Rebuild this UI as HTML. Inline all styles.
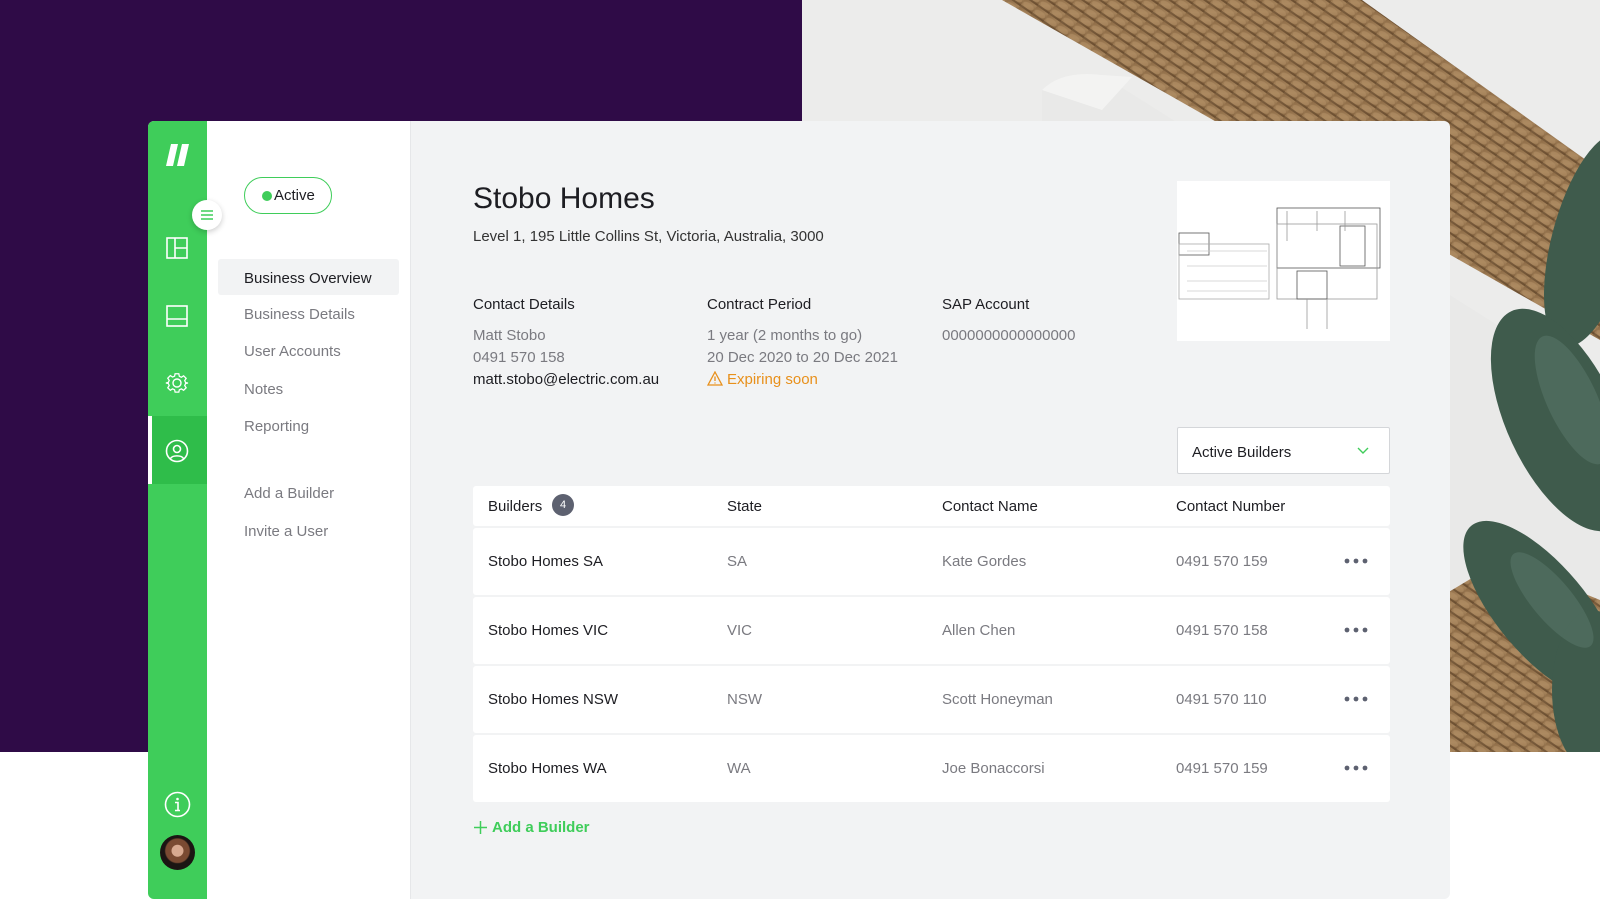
<!DOCTYPE html>
<html><head><meta charset="utf-8"><style>
*{margin:0;padding:0;box-sizing:border-box}
body{width:1600px;height:900px;position:relative;overflow:hidden;background:#fff;font-family:"Liberation Sans",sans-serif;color:#1d1d22}
.a{position:absolute}
.t{position:absolute;white-space:nowrap;font-size:15px}
.g{color:#7a7a80}
</style></head><body>
<div class="a" style="left:0;top:0;width:802px;height:752px;background:#2f0b47"></div>
<svg class="a" style="left:802px;top:0" width="798" height="752" viewBox="0 0 798 752">
  <defs>
    <linearGradient id="w" x1="0" y1="0" x2="1" y2="1"><stop offset="0" stop-color="#8c6a45"/><stop offset=".5" stop-color="#a4825a"/><stop offset="1" stop-color="#7a5a38"/></linearGradient>
    <pattern id="p" width="14" height="10" patternUnits="userSpaceOnUse" patternTransform="rotate(35)"><rect width="14" height="10" fill="url(#w)"/><ellipse cx="7" cy="5" rx="6" ry="3" fill="#b28f66" opacity=".6"/><rect y="8" width="14" height="2" fill="#5e4228" opacity=".6"/></pattern>
  </defs>
  <rect width="798" height="752" fill="#e4e4e3"/>
  <rect width="798" height="752" fill="#ececeb"/>
  <path d="M200 0H560L798 170V340Z" fill="url(#p)"/>
  <path d="M798 340L560 0H470L798 330Z" fill="url(#p)"/>
  <path d="M240 90Q260 70 300 75L798 390V752H560L240 300Z" fill="#e9e9e8"/>
  <path d="M240 90Q260 70 300 75L330 77L300 110Z" fill="#f3f3f2"/>
  <path d="M600 620L700 560L798 600V752H620Z" fill="url(#p)"/>
  <path d="M560 700L600 760L640 752Z" fill="#c9c2b5"/>
  <g fill="#3f5b4c">
    <ellipse cx="790" cy="240" rx="40" ry="110" transform="rotate(15 790 240)"/>
    <ellipse cx="760" cy="420" rx="55" ry="120" transform="rotate(-25 760 420)"/>
    <ellipse cx="740" cy="610" rx="45" ry="110" transform="rotate(-40 740 610)"/>
    <ellipse cx="790" cy="690" rx="40" ry="80"/>
  </g>
  <g fill="#5b7a6c" opacity=".5">
    <ellipse cx="770" cy="400" rx="25" ry="70" transform="rotate(-25 770 400)"/>
    <ellipse cx="750" cy="600" rx="20" ry="60" transform="rotate(-40 750 600)"/>
  </g>
</svg>
<div class="a" style="left:148px;top:121px;width:1302px;height:778px;background:#f2f3f4;border-radius:6px;overflow:hidden">
  <div class="a" style="left:0;top:0;width:59px;height:778px;background:#3fcd5a"></div>
  <div class="a" style="left:0;top:295px;width:59px;height:68px;background:#2fbd4a;border-left:4px solid #fff"></div>
  <div class="a" style="left:59px;top:0;width:204px;height:778px;background:#fff;border-right:1px solid #e6e7e9"></div>
</div>
<svg class="a" style="left:166px;top:143px" width="24" height="24" viewBox="0 0 24 24"><path d="M5 1h7L7 23H0z M16 1h7l-5 22h-7z" fill="#fff"/></svg>
<div class="a" style="left:192px;top:200px;width:30px;height:30px;border-radius:50%;background:#fff;box-shadow:0 2px 6px rgba(0,0,0,.2)"></div>
<svg class="a" style="left:200px;top:208px" width="14" height="14"><path d="M1 3h12M1 7h12M1 11h12" stroke="#3fcd5a" stroke-width="1.6"/></svg>
<svg class="a" style="left:166px;top:237px" width="22" height="22"><rect x="1" y="1" width="20" height="20" fill="none" stroke="#fff" stroke-width="1.6"/><path d="M9 1v20M9 11h12" stroke="#fff" stroke-width="1.6"/></svg>
<svg class="a" style="left:166px;top:305px" width="22" height="22"><rect x="1" y="1" width="20" height="20" fill="none" stroke="#fff" stroke-width="1.6"/><path d="M1 14h20" stroke="#fff" stroke-width="1.6"/></svg>
<svg class="a" style="left:165px;top:371px" width="24" height="24" viewBox="0 0 24 24"><path d="M10 2h4l.6 2.8 2.2 1 2.4-1.6 2.8 2.8-1.6 2.4 1 2.2L24 12v0l-2.6.6-1 2.2 1.6 2.4-2.8 2.8-2.4-1.6-2.2 1L14 22h-4l-.6-2.6-2.2-1-2.4 1.6-2.8-2.8 1.6-2.4-1-2.2L0 12l2.6-.6 1-2.2L2 6.8 4.8 4l2.4 1.6 2.2-1z" fill="none" stroke="#fff" stroke-width="1.4" transform="scale(.92) translate(1 1)"/><circle cx="12" cy="12" r="4" fill="none" stroke="#fff" stroke-width="1.4"/></svg>
<svg class="a" style="left:165px;top:439px" width="24" height="24"><circle cx="12" cy="12" r="10.5" fill="none" stroke="#fff" stroke-width="1.6"/><circle cx="12" cy="10" r="3.5" fill="none" stroke="#fff" stroke-width="1.6"/><path d="M5.5 19.5c2-3.5 11-3.5 13 0" fill="none" stroke="#fff" stroke-width="1.6"/></svg>
<svg class="a" style="left:164px;top:791px" width="27" height="27"><circle cx="13.5" cy="13.5" r="12" fill="none" stroke="#fff" stroke-width="1.6"/><circle cx="13.5" cy="8" r="1.3" fill="#fff"/><path d="M11 11.5h3v8M11 19.5h5" stroke="#fff" stroke-width="1.6" fill="none"/></svg>
<div class="a" style="left:160px;top:835px;width:35px;height:35px;border-radius:50%;background:radial-gradient(circle at 50% 45%,#d8a990 0 22%,#7a4a32 24% 45%,#1b1513 50%)"></div>
<div class="a" style="left:244px;top:177px;width:88px;height:37px;border:1.5px solid #3fcd5a;border-radius:19px"></div>
<div class="a" style="left:262px;top:191px;width:10px;height:10px;border-radius:50%;background:#3fcd5a"></div>
<div class="t" style="left:274px;top:187px;font-size:15px">Active</div>
<div class="a" style="left:218px;top:259px;width:181px;height:36px;background:#f2f3f4;border-radius:3px"></div>
<div class="t" style="left:244px;top:270px">Business Overview</div>
<div class="t g" style="left:244px;top:306px">Business Details</div>
<div class="t g" style="left:244px;top:343px">User Accounts</div>
<div class="t g" style="left:244px;top:381px">Notes</div>
<div class="t g" style="left:244px;top:418px">Reporting</div>
<div class="t g" style="left:244px;top:485px">Add a Builder</div>
<div class="t g" style="left:244px;top:523px">Invite a User</div>
<div class="t" style="left:473px;top:182px;font-size:30px">Stobo Homes</div>
<div class="t" style="left:473px;top:228px;color:#333">Level 1, 195 Little Collins St, Victoria, Australia, 3000</div>
<div class="t" style="left:473px;top:296px">Contact Details</div>
<div class="t g" style="left:473px;top:327px">Matt Stobo</div>
<div class="t g" style="left:473px;top:349px">0491 570 158</div>
<div class="t" style="left:473px;top:371px">matt.stobo@electric.com.au</div>
<div class="t" style="left:707px;top:296px">Contract Period</div>
<div class="t g" style="left:707px;top:327px">1 year (2 months to go)</div>
<div class="t g" style="left:707px;top:349px">20 Dec 2020 to 20 Dec 2021</div>
<svg class="a" style="left:707px;top:371px" width="16" height="15"><path d="M8 1L15 14H1z" fill="none" stroke="#e8901b" stroke-width="1.3"/><path d="M8 5.5v4.5M8 11.5v1" stroke="#e8901b" stroke-width="1.3"/></svg>
<div class="t" style="left:727px;top:371px;color:#e8901b">Expiring soon</div>
<div class="t" style="left:942px;top:296px">SAP Account</div>
<div class="t g" style="left:942px;top:327px">0000000000000000</div>
<div class="a" style="left:1177px;top:181px;width:213px;height:160px;background:#fff">
<svg width="213" height="160"><g fill="none" stroke="#555" stroke-width=".8"><rect x="100" y="27" width="103" height="60"/><rect x="2" y="52" width="30" height="22"/><rect x="2" y="63" width="90" height="55" stroke="#aaa"/><rect x="100" y="43" width="100" height="75" stroke="#999"/><rect x="120" y="90" width="30" height="28"/><rect x="163" y="45" width="25" height="40"/><path d="M110 30v30M140 30v20M168 30v20M130 118v30M150 118v30" stroke="#999"/><path d="M10 70h80M10 85h80M10 100h80M10 110h80" stroke="#ccc"/></g></svg></div>
<div class="a" style="left:1177px;top:427px;width:213px;height:47px;background:#fff;border:1px solid #d4d6d9;border-radius:2px"></div>
<div class="t" style="left:1192px;top:444px">Active Builders</div>
<svg class="a" style="left:1357px;top:447px" width="12" height="8"><path d="M1 1l5 5 5-5" fill="none" stroke="#3fcd5a" stroke-width="1.4"/></svg>
<div class="a" style="left:473px;top:486px;width:917px;height:40px;background:#fff;border-radius:3px"></div>
<div class="t" style="left:488px;top:498px">Builders</div>
<div class="a" style="left:552px;top:494px;width:22px;height:22px;border-radius:50%;background:#5d6170;color:#fff;font-size:11px;text-align:center;line-height:22px">4</div>
<div class="t" style="left:727px;top:498px">State</div>
<div class="t" style="left:942px;top:498px">Contact Name</div>
<div class="t" style="left:1176px;top:498px">Contact Number</div>
<div class="a" style="left:473px;top:528px;width:917px;height:67px;background:#fff;border-radius:3px"></div>
<div class="a" style="left:473px;top:597px;width:917px;height:67px;background:#fff;border-radius:3px"></div>
<div class="a" style="left:473px;top:666px;width:917px;height:67px;background:#fff;border-radius:3px"></div>
<div class="a" style="left:473px;top:735px;width:917px;height:67px;background:#fff;border-radius:3px"></div>
<div class="t" style="left:488px;top:553px">Stobo Homes SA</div><div class="t g" style="left:727px;top:553px">SA</div><div class="t g" style="left:942px;top:553px">Kate Gordes</div><div class="t g" style="left:1176px;top:553px">0491 570 159</div>
<div class="t" style="left:488px;top:622px">Stobo Homes VIC</div><div class="t g" style="left:727px;top:622px">VIC</div><div class="t g" style="left:942px;top:622px">Allen Chen</div><div class="t g" style="left:1176px;top:622px">0491 570 158</div>
<div class="t" style="left:488px;top:691px">Stobo Homes NSW</div><div class="t g" style="left:727px;top:691px">NSW</div><div class="t g" style="left:942px;top:691px">Scott Honeyman</div><div class="t g" style="left:1176px;top:691px">0491 570 110</div>
<div class="t" style="left:488px;top:760px">Stobo Homes WA</div><div class="t g" style="left:727px;top:760px">WA</div><div class="t g" style="left:942px;top:760px">Joe Bonaccorsi</div><div class="t g" style="left:1176px;top:760px">0491 570 159</div>
<svg class="a" style="left:1344px;top:558px" width="26" height="230" fill="#5d6170"><g><circle cx="3" cy="3" r="2.4"/><circle cx="12" cy="3" r="2.4"/><circle cx="21" cy="3" r="2.4"/></g><g transform="translate(0 69)"><circle cx="3" cy="3" r="2.4"/><circle cx="12" cy="3" r="2.4"/><circle cx="21" cy="3" r="2.4"/></g><g transform="translate(0 138)"><circle cx="3" cy="3" r="2.4"/><circle cx="12" cy="3" r="2.4"/><circle cx="21" cy="3" r="2.4"/></g><g transform="translate(0 207)"><circle cx="3" cy="3" r="2.4"/><circle cx="12" cy="3" r="2.4"/><circle cx="21" cy="3" r="2.4"/></g></svg>
<svg class="a" style="left:474px;top:821px" width="13" height="13"><path d="M6.5 0v13M0 6.5h13" stroke="#3fcd5a" stroke-width="1.5"/></svg>
<div class="t" style="left:492px;top:819px;color:#3fcd5a;font-weight:bold">Add a Builder</div>
</body></html>
